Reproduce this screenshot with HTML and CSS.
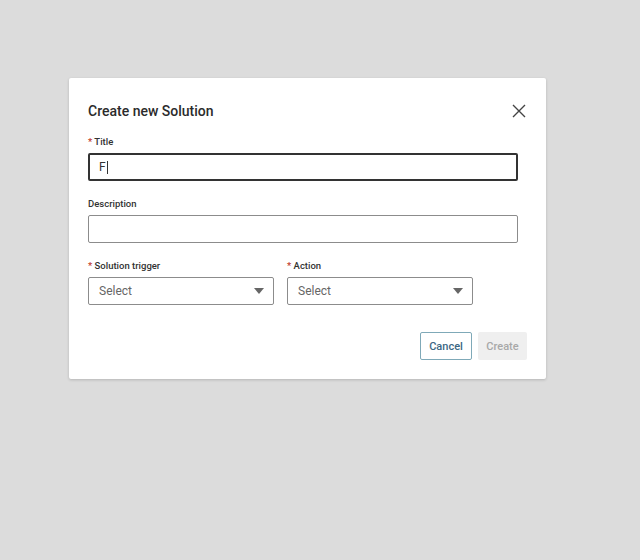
FILE: index.html
```html
<!doctype html>
<html lang="en">
<head>
    <meta charset="UTF-8">
    <title>Create new Solution</title>
    <link rel="stylesheet" href="styles.css">
</head>
<body>
<div class="overlay">
    <div class="modal">
        <div class="modal-head">
            <h2 class="modal-title">Create new Solution</h2>
            <button class="close" type="button" aria-label="Close">
                <svg width="14" height="14" viewBox="0 0 14 14"><path d="M1 1L13 13M13 1L1 13" stroke="#444" stroke-width="1.4" fill="none"/></svg>
            </button>
        </div>
        <div class="field">
            <label class="label"><span class="req">*</span> Title</label>
            <div class="input input-focus"><span class="value">F</span><span class="caret"></span></div>
        </div>
        <div class="field">
            <label class="label">Description</label>
            <div class="input"></div>
        </div>
        <div class="row">
            <div class="field col">
                <label class="label"><span class="req">*</span> Solution trigger</label>
                <div class="input select"><span class="placeholder">Select</span><span class="arrow"></span></div>
            </div>
            <div class="field col">
                <label class="label"><span class="req">*</span> Action</label>
                <div class="input select"><span class="placeholder">Select</span><span class="arrow"></span></div>
            </div>
        </div>
        <div class="modal-foot">
            <button class="btn btn-cancel" type="button">Cancel</button>
            <button class="btn btn-create" type="button" disabled>Create</button>
        </div>
    </div>
</div>
</body>
</html>
```

FILE: styles.css
```css
*{margin: 0;padding: 0;box-sizing: border-box}
html,body{height: 100%}
body{background: #dcdcdc;font-family: Roboto, "Liberation Sans", Arial, sans-serif;color: #333}
.overlay{padding: 78px 0 0 69px}
.modal{
    width: 477px;
    background: #fff;
    border-radius: 2px;
    box-shadow: 0 1px 3px rgba(0,0,0,.18);
    padding: 22px 19px 19px 19px;
}
.modal-head{display: flex;align-items: center;justify-content: space-between;height: 22px;margin-bottom: 13px}
.modal-title{font-size: 14px;font-weight: 500;line-height: 22px;color: #2b2b2b}
.close{border: 0;background: none;width: 14px;height: 14px;display: flex;margin-right: 1px;cursor: pointer}
.field{margin-bottom: 16px}
.label{display: block;font-size: 9.5px;font-weight: 500;line-height: 14px;color: #333;margin-bottom: 4px}
.req{color: #c0392b}
.input{
    width: 430px;
    height: 28px;
    border: 1px solid #8c8c8c;
    border-radius: 2px;
    display: flex;
    align-items: center;
    padding: 0 9px 0 10px;
    font-size: 12px;
}
.input-focus{border: 2px solid #333;padding: 0 9px}
.value{color: #333}
.caret{display: inline-block;width: 1px;height: 13px;background: #333;margin-left: 1px}
.row{display: flex;gap: 13px}
.row .field{margin-bottom: 0}
.select{width: 186px;justify-content: space-between}
.placeholder{color: #666}
.arrow{width: 0;height: 0;border-left: 5px solid transparent;border-right: 5px solid transparent;border-top: 6px solid #666}
.modal-foot{display: flex;justify-content: flex-end;gap: 6px;margin-top: 27px}
.btn{height: 28px;border-radius: 2px;font-family: inherit;font-size: 11px;font-weight: 500;padding: 0}
.btn-cancel{width: 52px;border: 1px solid #7fa9b8;background: #fff;color: #3c6784}
.btn-create{width: 49px;border: 0;background: #efefef;color: #a8a8a8}
```
